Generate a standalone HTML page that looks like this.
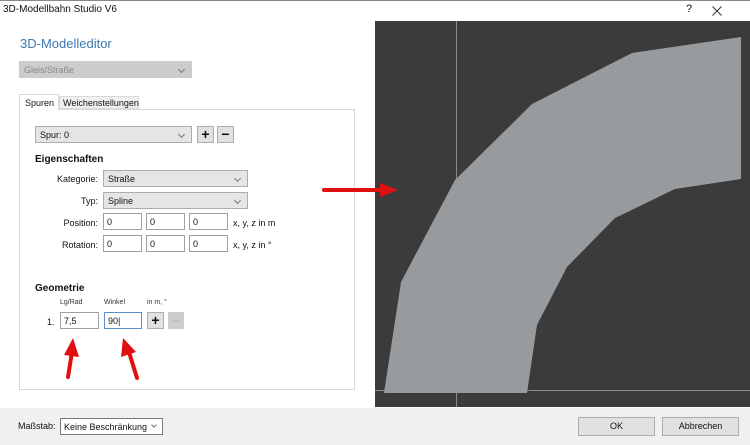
<!DOCTYPE html>
<html><head><meta charset="utf-8"><style>
*{box-sizing:border-box;margin:0;padding:0}
body{width:750px;height:445px;position:relative;overflow:hidden;background:#fff;font-family:"Liberation Sans",sans-serif;font-size:9px;color:#111}
.a{position:absolute}
.sel{position:absolute;border:1px solid #adadad;background:#e5e5e5;height:17px;padding:3px 4px;font-size:9px}
.sel:after{content:"";position:absolute;right:7px;top:5px;width:4px;height:4px;border-right:1px solid #777;border-bottom:1px solid #777;transform:rotate(45deg)}
.inp{position:absolute;border:1px solid #a0a0a0;background:#fff;height:17px;padding:3px 3px;font-size:9px}
.btn{position:absolute;border:1px solid #adadad;background:#e1e1e1;text-align:center}
.lbl{position:absolute;font-size:9px;text-align:right}
</style></head><body>
<div class="a" style="left:0;top:0;width:750px;height:1px;background:#888"></div>
<div class="a" style="left:3px;top:4px;font-size:10px">3D-Modellbahn Studio V6</div>
<div class="a" style="left:686px;top:3px;font-size:11px">?</div>
<svg class="a" style="left:712px;top:6px" width="10" height="10"><path d="M0.5 0.5L9.5 9.5M9.5 0.5L0.5 9.5" stroke="#333" stroke-width="1"/></svg>

<div class="a" style="left:20px;top:36px;font-size:13px;color:#3c7ab0">3D-Modelleditor</div>
<div class="sel" style="left:19px;top:61px;width:173px;background:#ccc;border-color:#ccc;color:#888">Gleis/Straße</div>

<div class="a" style="left:19px;top:109px;width:336px;height:281px;border:1px solid #d9d9d9"></div>
<div class="a" style="left:19px;top:94px;width:40px;height:16px;border:1px solid #d9d9d9;border-bottom:none;background:#fff;padding:3px 5px">Spuren</div>
<div class="a" style="left:59px;top:96px;width:80px;height:13px;border:1px solid #d9d9d9;background:#f0f0f0;padding:1px 3px">Weichenstellungen</div>

<div class="sel" style="left:35px;top:126px;width:157px">Spur: 0</div>
<div class="btn" style="left:197px;top:126px;width:17px;height:17px;font-size:14px;line-height:14px;font-weight:bold">+</div>
<div class="btn" style="left:217px;top:126px;width:17px;height:17px;font-size:14px;line-height:14px;font-weight:bold">−</div>

<div class="a" style="left:35px;top:154px;font-weight:bold;font-size:10px">Eigenschaften</div>
<div class="lbl" style="left:40px;top:174px;width:58px">Kategorie:</div>
<div class="sel" style="left:103px;top:170px;width:145px">Straße</div>
<div class="lbl" style="left:40px;top:196px;width:58px">Typ:</div>
<div class="sel" style="left:103px;top:192px;width:145px">Spline</div>
<div class="lbl" style="left:40px;top:218px;width:58px">Position:</div>
<div class="inp" style="left:103px;top:213px;width:39px">0</div>
<div class="inp" style="left:146px;top:213px;width:39px">0</div>
<div class="inp" style="left:189px;top:213px;width:39px">0</div>
<div class="a" style="left:233px;top:218px">x, y, z in m</div>
<div class="lbl" style="left:40px;top:240px;width:58px">Rotation:</div>
<div class="inp" style="left:103px;top:235px;width:39px">0</div>
<div class="inp" style="left:146px;top:235px;width:39px">0</div>
<div class="inp" style="left:189px;top:235px;width:39px">0</div>
<div class="a" style="left:233px;top:240px">x, y, z in °</div>

<div class="a" style="left:35px;top:283px;font-weight:bold;font-size:10px">Geometrie</div>
<div class="a" style="left:60px;top:299px;font-size:7px;color:#333">Lg/Rad</div>
<div class="a" style="left:104px;top:299px;font-size:7px;color:#333">Winkel</div>
<div class="a" style="left:147px;top:299px;font-size:7px;color:#333">in m, °</div>
<div class="a" style="left:47px;top:317px">1.</div>
<div class="inp" style="left:60px;top:312px;width:39px">7,5</div>
<div class="inp" style="left:104px;top:312px;width:38px;border-color:#5a8fc8">90|</div>
<div class="btn" style="left:147px;top:312px;width:17px;height:17px;font-size:14px;line-height:14px;font-weight:bold">+</div>
<div class="btn" style="left:168px;top:312px;width:16px;height:17px;background:#ccc;border-color:#ccc;color:#999;line-height:14px">−</div>

<svg class="a" style="left:0;top:0" width="750" height="445">
<polygon points="375,21 750,21 750,407 375,407" fill="#3b3b3b"/>
<line x1="456.5" y1="21" x2="456.5" y2="407" stroke="#8a8a8a"/>
<line x1="375" y1="390.5" x2="750" y2="390.5" stroke="#8a8a8a"/>
<polygon points="741,37 632,53 532,104 455,180 401,282 384,393 527,393 537,325 567,267 615,218 675,189 741,179" fill="#979b9e"/>
<g stroke="#e01010" stroke-width="4" stroke-linecap="round" fill="#e01010">
<line x1="324" y1="190" x2="382" y2="190"/>
<polygon points="380,183 398,190 380,197" stroke="none"/>
<line x1="68" y1="377" x2="72" y2="352"/>
<polygon points="64,355 73,338 79,357" stroke="none"/>
<line x1="137" y1="378" x2="129" y2="352"/>
<polygon points="121,357 123,338 136,352" stroke="none"/>
</g>
</svg>

<div class="a" style="left:0;top:408px;width:750px;height:37px;background:#f0f0f0"></div>
<div class="a" style="left:18px;top:421px">Maßstab:</div>
<div class="inp" style="left:60px;top:418px;width:103px;border-color:#7a7a7a">Keine Beschränkung</div>
<div class="a" style="left:152px;top:423px;width:4px;height:4px;border-right:1px solid #777;border-bottom:1px solid #777;transform:rotate(45deg)"></div>
<div class="btn" style="left:578px;top:417px;width:77px;height:19px;line-height:17px">OK</div>
<div class="btn" style="left:662px;top:417px;width:77px;height:19px;line-height:17px">Abbrechen</div>
</body></html>
